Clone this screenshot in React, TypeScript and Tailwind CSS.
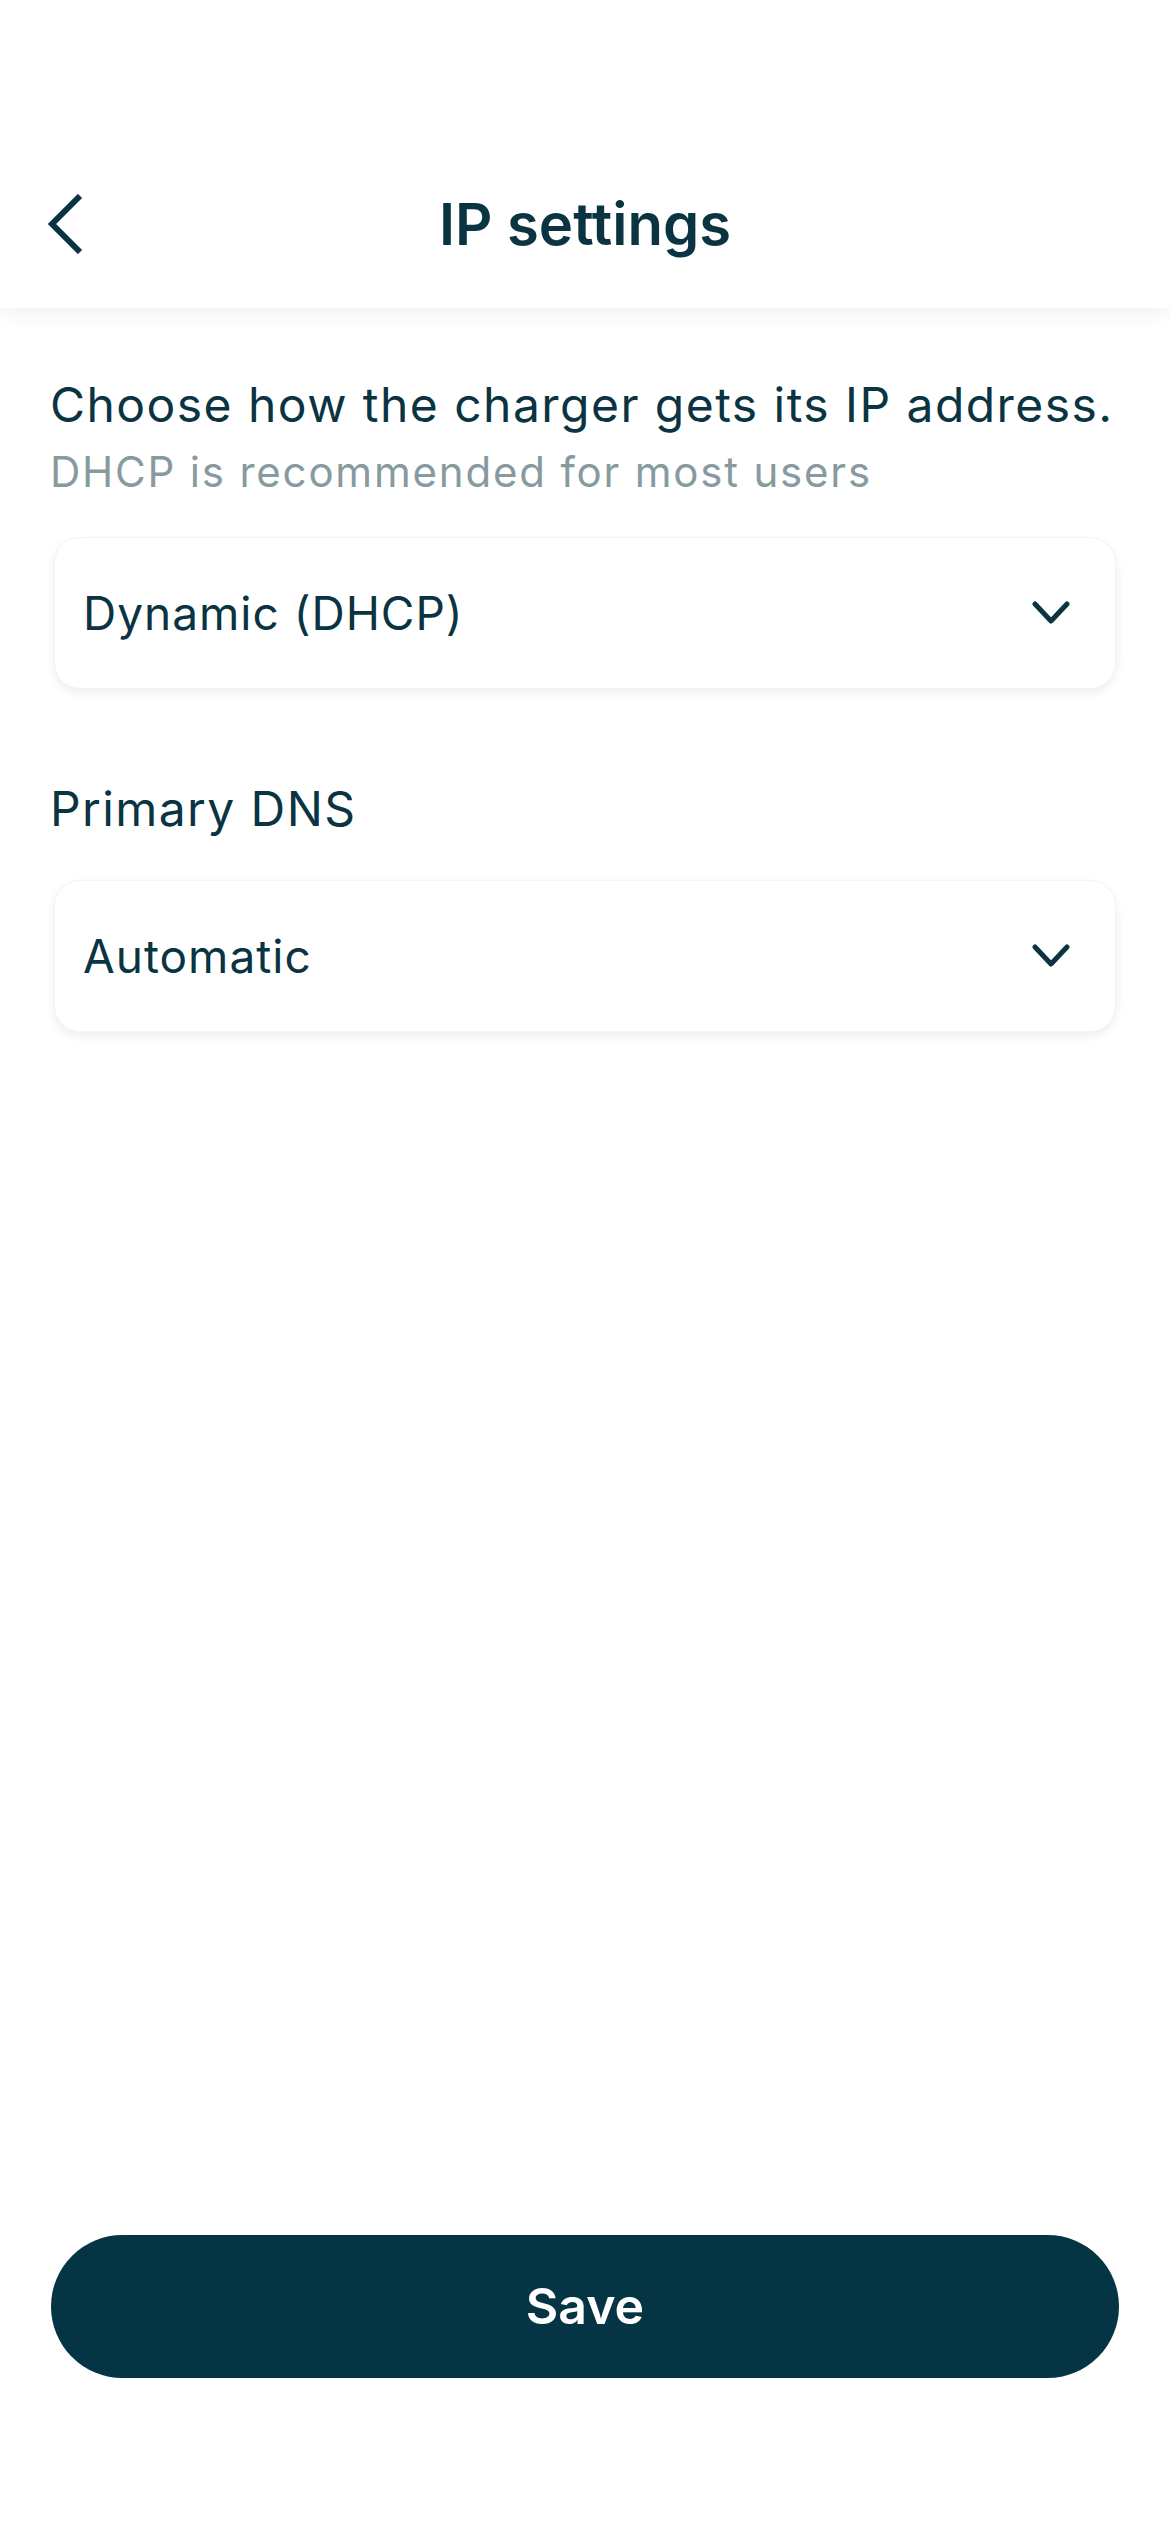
import { useState } from 'react';

const font = { fontFamily: 'Inter, "Liberation Sans", Arial, sans-serif' };

function ChevronDown() {
  return (
    <svg width="38" height="24" viewBox="0 0 38 24" fill="none" stroke="#0a3441" strokeWidth="5" strokeLinecap="round" strokeLinejoin="round">
      <path d="M3 3l16 17L35 3" />
    </svg>
  );
}

function BackIcon() {
  return (
    <svg width="38" height="60" viewBox="0 0 38 60" fill="none" stroke="#0a3441" strokeWidth="6" strokeLinejoin="miter">
      <path d="M34 2L6 30l28 28" />
    </svg>
  );
}

interface SelectBoxProps {
  value: string;
}

function SelectBox({ value }: SelectBoxProps) {
  return (
    <button className="mx-[4px] h-[152px] flex items-center justify-between pl-[28px] pr-[45px] rounded-[26px] bg-white border border-[#f3f4f4] shadow-[0_4px_10px_rgba(0,0,0,0.07)] text-left">
      <span className="text-[46px] leading-[54px] tracking-[1px] text-[#0a3441]">{value}</span>
      <ChevronDown />
    </button>
  );
}

export default function App() {
  const [mode] = useState('Dynamic (DHCP)');

  return (
    <div className="w-[1170px] min-h-[2532px] flex flex-col bg-white" style={font}>
      {/* Header */}
      <header className="relative z-10 h-[308px] flex flex-col justify-end bg-white shadow-[0_6px_22px_rgba(0,0,0,0.06)]">
        <div className="relative h-[168px] flex items-center justify-center">
          <button className="absolute left-[46px] top-[54px]">
            <BackIcon />
          </button>
          <h1 className="text-[58px] leading-[68px] font-semibold text-[#0a3441]">IP settings</h1>
        </div>
      </header>

      {/* Content */}
      <main className="flex-1 px-[50px]">
        <p className="mt-[68px] text-[48px] leading-[58px] tracking-[1.45px] text-[#0a3441] whitespace-nowrap">
          Choose how the charger gets its IP address.
        </p>
        <p className="mt-[13px] text-[42px] leading-[50px] tracking-[1.8px] text-[#879aa0]">
          DHCP is recommended for most users
        </p>
        <div className="mt-[40px] flex flex-col">
          <SelectBox value={mode} />
        </div>

        <p className="mt-[91px] text-[48px] leading-[58px] tracking-[1.4px] text-[#0a3441]">Primary DNS</p>
        <div className="mt-[42px] flex flex-col">
          <SelectBox value="Automatic" />
        </div>
      </main>

      {/* Footer action */}
      <div className="px-[51px] pb-[154px]">
        <button className="w-full h-[143px] rounded-full bg-[#053544] text-white text-[50px] font-semibold">
          Save
        </button>
      </div>
    </div>
  );
}
